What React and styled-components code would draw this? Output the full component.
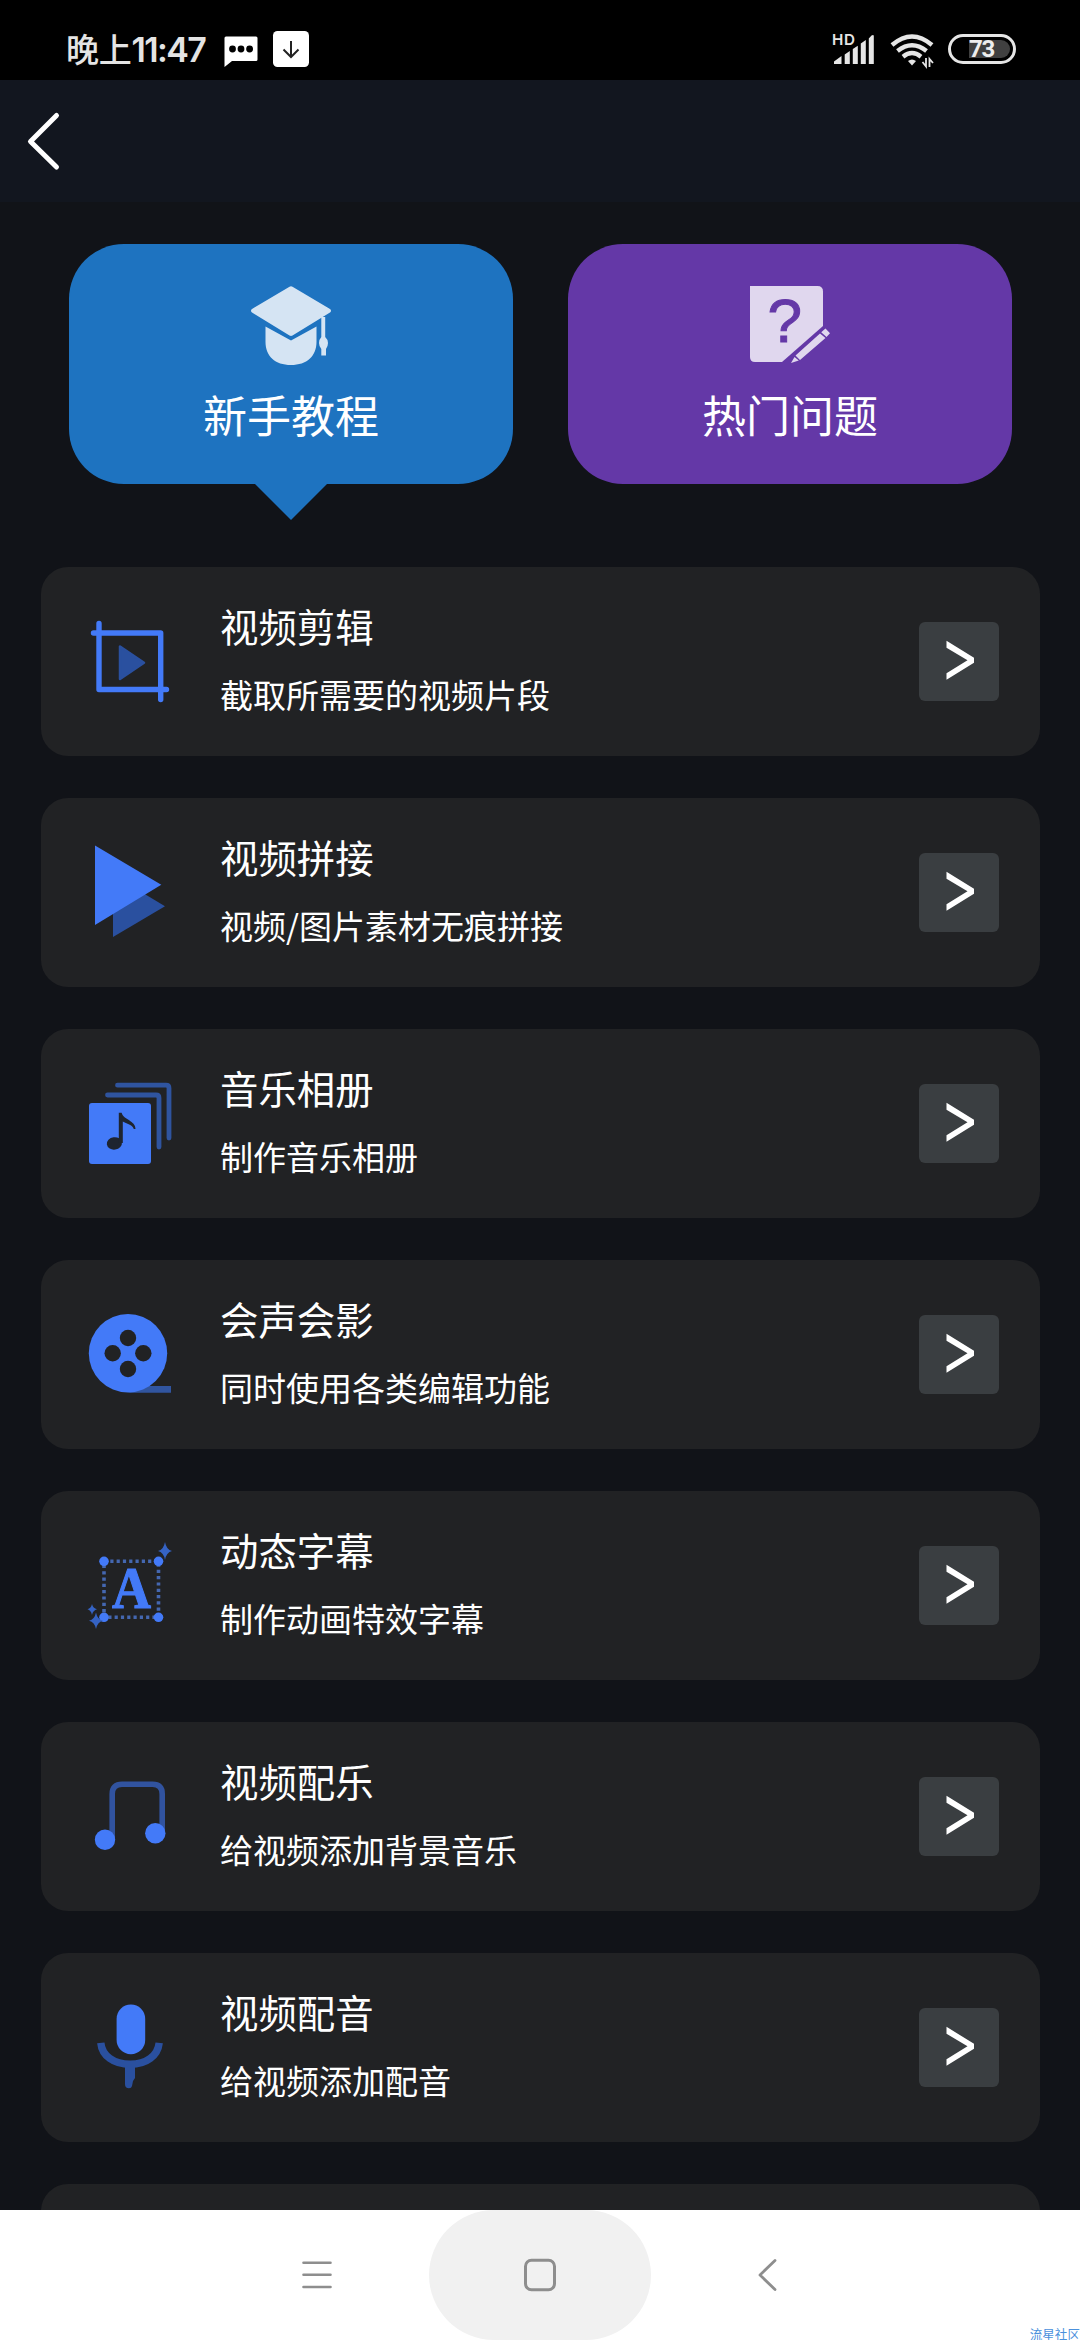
import React, { useState } from "react";
import styled, { createGlobalStyle } from "styled-components";

const GlobalStyle = createGlobalStyle`
  * {
    box-sizing: border-box;
  }
  body {
    margin: 0;
    background: #111318;
    font-family: "Noto Sans CJK SC", "Noto Sans", sans-serif;
  }
`;

const Screen = styled.div`
  display: flex;
  flex-direction: column;
  width: 1080px;
  height: 2340px;
  overflow: hidden;
  background: #111318;
  color: #ffffff;
`;
const StatusBar = styled.div`
  display: flex;
  justify-content: space-between;
  flex: none;
  height: 80px;
  padding: 0 64px 0 66px;
  background: #000000;
`;
const StatusGroup = styled.div`
  display: flex;
  align-items: center;
  padding-top: 18px;
`;
const Clock = styled.span`
  width: 158px;
  font-size: 33px;
  line-height: 40px;
  font-weight: 500;
  letter-spacing: -0.3px;
  color: #e4e4e4;
  white-space: nowrap;
`;
const ClockDigits = styled.span`
  font-family: Inter, sans-serif;
  font-size: 34px;
  font-weight: 600;
  letter-spacing: -1.6px;
`;
const StatusIcon = styled.svg`
  display: block;
  overflow: visible;
  margin-left: ${(props) => props.$gap || 0}px;
`;
const Battery = styled.div`
  display: flex;
  align-items: center;
  width: 68px;
  height: 30px;
  margin-left: 14px;
  padding-left: 18px;
  border: 3px solid #e6e6e6;
  border-radius: 15px;
`;
const BatteryLevel = styled.div`
  width: 41px;
  height: 18px;
  border-radius: 0 9px 9px 0;
  background: #404040;
  color: #eeeeee;
  font-family: Roboto, sans-serif;
  font-size: 24px;
  font-weight: 700;
  line-height: 19px;
  letter-spacing: -1.2px;
`;
const Header = styled.div`
  display: flex;
  flex: none;
  height: 122px;
  padding: 31px 0 0 24px;
  background: #12161f;
`;
const Content = styled.div`
  flex: 1;
  min-height: 0;
  overflow: hidden;
`;
const Tabs = styled.div`
  display: flex;
  gap: 55px;
  padding: 42px 0 0 69px;
`;
const Tab = styled.div`
  position: relative;
  display: flex;
  flex-direction: column;
  align-items: center;
  width: 444px;
  height: 240px;
  padding-top: 42px;
  border-radius: 55px;
  background: ${(props) => props.$color};
`;
const TabPointer = styled.div`
  position: absolute;
  top: 239px;
  left: 185px;
  border: 37px solid transparent;
  border-top-color: ${(props) => props.$color};
  border-bottom: 0;
`;
const TabIcon = styled.svg`
  display: block;
  flex: none;
  overflow: visible;
`;
const TabLabel = styled.div`
  margin-top: 15px;
  font-size: 44px;
  line-height: 66px;
`;
const List = styled.div`
  display: flex;
  flex-direction: column;
  gap: 42px;
  padding: 83px 40px 0 41px;
`;
const Card = styled.div`
  display: flex;
  align-items: center;
  flex: none;
  height: 189px;
  padding: 0 41px 0 45px;
  border-radius: 27px;
  background: #212224;
`;
const CardText = styled.div`
  flex: 1;
  padding: 0 0 9px 44px;
`;
const Title = styled.div`
  font-size: 38.4px;
  line-height: 56px;
`;
const Subtitle = styled.div`
  margin-top: 17px;
  font-size: 33px;
  line-height: 48px;
`;
const GoButton = styled.div`
  display: flex;
  width: 80px;
  height: 79px;
  border-radius: 6px;
  background: #3a3e41;
`;
const NavBar = styled.div`
  position: relative;
  display: flex;
  justify-content: center;
  flex: none;
  height: 130px;
  padding-right: 1px;
  background: #ffffff;
`;
const NavButton = styled.div`
  display: flex;
  align-items: center;
  justify-content: center;
  width: ${(props) => (props.$active ? 222 : 225)}px;
  height: 130px;
  padding-left: ${(props) => props.$shift || 0}px;
  border-radius: 65px;
  background: ${(props) => (props.$active ? "#f1f1f1" : "transparent")};
`;
const Watermark = styled.div`
  position: absolute;
  right: 0;
  bottom: 0;
  font-size: 12.6px;
  line-height: 13px;
  color: #4a90dc;
`;

const BLUE = "#437af8";
const DARK_BLUE = "#2a509f";

const CropIcon = () => (
  <g fill="none" stroke={BLUE} strokeWidth="5.4" strokeLinecap="round">
    <path d="M13 12.5V78.5H80.5M7.5 22H74.7V88.5" strokeLinejoin="round" />
    <path
      d="M34 35.5V68L58 51.7Z"
      fill={DARK_BLUE}
      stroke={DARK_BLUE}
      strokeWidth="2.5"
      strokeLinejoin="round"
    />
  </g>
);
const JoinIcon = () => (
  <>
    <path d="M27 33V95L79 64.3Z" fill={DARK_BLUE} />
    <path d="M9 3.5V83L75.3 42.7Z" fill={BLUE} />
  </>
);
const AlbumIcon = () => (
  <>
    <path
      d="M21.5 22H70Q73 22 73 25V74M31.5 12.2H80Q83 12.2 83 15.2V65"
      fill="none"
      stroke="#2f549f"
      strokeWidth="4.8"
      strokeLinecap="round"
    />
    <rect x="3" y="30" width="62" height="61" rx="3" fill={BLUE} />
    <ellipse cx="28.4" cy="70.4" rx="7.6" ry="6.2" fill="#1e2430" transform="rotate(-8 28.4 70.4)" />
    <path
      d="M32.8 70V39.8H35.6C37.5 47 49.5 47.5 49.5 56H47.8C46.5 51.5 40.5 51 36.8 48.5V70Z"
      fill="#1e2430"
    />
  </>
);
const ReelIcon = () => (
  <>
    <path d="M42 88.7H85V82H60Z" fill="#31559f" />
    <circle cx="42" cy="49.3" r="39.2" fill={BLUE} />
    <g fill="#212224">
      <circle cx="42" cy="34" r="8.2" />
      <circle cx="26.7" cy="49.3" r="8.2" />
      <circle cx="57.3" cy="49.3" r="8.2" />
      <circle cx="42" cy="65" r="8.2" />
    </g>
  </>
);
const CaptionIcon = () => (
  <>
    <path
      d="M18 26.3H72.5V82.3H18Z"
      fill="none"
      stroke="#4467b0"
      strokeWidth="3.6"
      strokeDasharray="3.2 3.1"
    />
    <g fill={BLUE}>
      <circle cx="18" cy="26.3" r="4.8" />
      <circle cx="72.5" cy="26.3" r="4.8" />
      <circle cx="18" cy="82.3" r="4.8" />
      <circle cx="72.5" cy="82.3" r="4.8" />
    </g>
    <text
      x="26"
      y="72.5"
      fontFamily="Liberation Serif, serif"
      fontWeight="700"
      fontSize="60"
      textLength="39"
      lengthAdjust="spacingAndGlyphs"
      fill={BLUE}
      stroke={BLUE}
      strokeWidth="1.2"
    >
      A
    </text>
    <g fill="#3563c4">
      <path d="M79 7Q80.3 14.7 86 16Q80.3 17.3 79 25Q77.7 17.3 72 16Q77.7 14.7 79 7Z" />
      <path d="M10 77.5Q11.3 84.4 17 85.7Q11.3 87 10 94Q8.7 87 3 85.7Q8.7 84.4 10 77.5Z" />
      <path d="M6 69Q7 73.3 11 74.3Q7 75.3 6 80Q5 75.3 1.5 74.3Q5 73.3 6 69Z" />
    </g>
  </>
);
const MusicIcon = () => (
  <>
    <path
      d="M26.2 72V28Q26.2 18.3 36 18.3H66.5Q76.2 18.3 76.2 28V66"
      fill="none"
      stroke="#31539f"
      strokeWidth="5.6"
    />
    <circle cx="19" cy="73.7" r="10.2" fill={BLUE} />
    <circle cx="69.3" cy="67.3" r="10.2" fill={BLUE} />
  </>
);
const MicIcon = () => (
  <>
    <path
      d="M14.8 45.8C16 59 28 67.3 44.3 67.3C60 67.3 71.8 59 73.2 45.8"
      fill="none"
      stroke={DARK_BLUE}
      strokeWidth="7.4"
    />
    <path d="M39 68H49V81L47 84L46 89Q45.5 91.3 43 91.3Q39 91.3 39 87Z" fill={DARK_BLUE} />
    <rect x="30.6" y="7.6" width="28.6" height="49.6" rx="14.2" fill={BLUE} />
  </>
);

const tutorials = [
  { title: "视频剪辑", text: "截取所需要的视频片段", Icon: CropIcon },
  { title: "视频拼接", text: "视频/图片素材无痕拼接", Icon: JoinIcon },
  { title: "音乐相册", text: "制作音乐相册", Icon: AlbumIcon },
  { title: "会声会影", text: "同时使用各类编辑功能", Icon: ReelIcon },
  { title: "动态字幕", text: "制作动画特效字幕", Icon: CaptionIcon },
  { title: "视频配乐", text: "给视频添加背景音乐", Icon: MusicIcon },
  { title: "视频配音", text: "给视频添加配音", Icon: MicIcon },
];

const TutorialCard = ({ title, text, Icon }) => (
  <Card>
    <svg width="90" height="101" viewBox="0 0 90 101">
      <Icon />
    </svg>
    <CardText>
      <Title>{title}</Title>
      <Subtitle>{text}</Subtitle>
    </CardText>
    <GoButton>
      <svg width="80" height="79" viewBox="0 0 80 79">
        <path d="M27.5 18.8L55 35.8V40.7L27.5 57.8V51.3L48.5 38.3L27.5 25.8Z" fill="#ffffff" />
      </svg>
    </GoButton>
  </Card>
);

const CapIcon = () => (
  <TabIcon width="80" height="80" viewBox="0 0 80 80" fill="#d5e4f3">
    <path d="M38.5 .7Q40 -.2 41.5 .7L79 23Q81 24.7 79 26.5L41.5 49.5Q40 50.4 38.5 49.5L1 26.5Q-1 24.7 1 23Z" />
    <path d="M14.5 40.5L40 54.5L65.5 40.5V56C65.5 70 56 79 40 79C24 79 14.5 70 14.5 56Z" />
    <path d="M70.3 31H74.2V51Q77 53.5 77 57Q77 60 75 63V69.5H70.3V63Q68 60 68 57Q68 53.5 70.3 51Z" />
  </TabIcon>
);
const QuestionIcon = () => (
  <TabIcon width="80" height="80" viewBox="0 0 80 80" fill="#e0d7ee">
    <path d="M0 0H67.5Q73 0 73 5.5V40L32 76H5Q0 76 0 71Z" />
    <text
      x="17.5"
      y="55.5"
      fontFamily="Liberation Sans, sans-serif"
      fontSize="62"
      fill="#6438a7"
      stroke="#6438a7"
      strokeWidth="1"
    >
      ?
    </text>
    <path d="M45.5 69.5L70 47.5L75.5 52L50 74ZM71.2 46.2L75.5 42.5L80 47.3L76.5 51ZM44.5 71L48.8 74.5L41 77Z" />
  </TabIcon>
);

const SignalIcon = () => (
  <StatusIcon width="44" height="36" viewBox="0 0 44 36" fill="#e6e6e6">
    <text x="0" y="13.6" fontFamily="Inter, sans-serif" fontWeight="600" fontSize="15.2" textLength="23">
      HD
    </text>
    <path d="M2 33V30.5L9.5 25V33ZM12.7 33V23.5L17.8 20V33ZM20.8 33V18L25.8 14.7V33ZM28.8 33V12.5L33.8 9V33ZM36.8 33V7.5L39.5 4.5Q41.8 3.5 41.8 5V33Z" />
  </StatusIcon>
);
const WifiIcon = () => (
  <StatusIcon $gap={14} width="44" height="36" viewBox="0 0 44 36">
    <g fill="none" stroke="#e6e6e6" strokeWidth="4.4">
      <path d="M2 14Q22 -3 42 14" />
      <path d="M7.5 20Q22 8.5 36.5 20" />
      <path d="M13 25.7Q22 18.5 31 25.7" />
    </g>
    <path d="M18 30Q22 26.8 26 30L22 34.5Z" fill="#e6e6e6" />
    <path d="M36 27V35.5L32.5 31M39.5 36V28L43 32" fill="none" stroke="#e6e6e6" strokeWidth="1.8" />
  </StatusIcon>
);

function App() {
  const [active, setActive] = useState(0);
  const tabs = [
    { label: "新手教程", color: "#1e73c0", Icon: CapIcon },
    { label: "热门问题", color: "#6438a7", Icon: QuestionIcon },
  ];

  return (
    <Screen>
      <GlobalStyle />
      <StatusBar>
        <StatusGroup>
          <Clock>
            晚上<ClockDigits>11:47</ClockDigits>
          </Clock>
          <StatusIcon width="34" height="36" viewBox="0 0 34 36">
            <path d="M2 5.5H32Q33.5 5.5 33.5 7V28.5Q33.5 30 32 30H8L.5 36V7Q.5 5.5 2 5.5Z" fill="#fff" />
            <circle cx="8.5" cy="18" r="3.4" />
            <circle cx="17" cy="18" r="3.4" />
            <circle cx="25.6" cy="18" r="3.4" />
          </StatusIcon>
          <StatusIcon $gap={15} width="36" height="36" viewBox="0 0 36 36">
            <rect width="36" height="36" rx="4.5" fill="#fff" />
            <path d="M18 10V26M10.5 18.5L18 26L25.5 18.5" fill="none" stroke="#222" strokeWidth="2" />
          </StatusIcon>
        </StatusGroup>
        <StatusGroup>
          <SignalIcon />
          <WifiIcon />
          <Battery>
            <BatteryLevel>73</BatteryLevel>
          </Battery>
        </StatusGroup>
      </StatusBar>
      <Header>
        <svg width="40" height="62" viewBox="0 0 40 62">
          <path
            d="M32.5 4.5L6.5 30.5L32.5 56"
            fill="none"
            stroke="#fff"
            strokeWidth="5"
            strokeLinecap="round"
            strokeLinejoin="round"
          />
        </svg>
      </Header>
      <Content>
        <Tabs>
          {tabs.map(({ label, color, Icon }, index) => (
            <Tab key={label} $color={color} onClick={() => setActive(index)}>
              <Icon />
              <TabLabel>{label}</TabLabel>
              {active === index && <TabPointer $color={color} />}
            </Tab>
          ))}
        </Tabs>
        <List>
          {tutorials.map((item) => (
            <TutorialCard key={item.title} {...item} />
          ))}
          <Card />
        </List>
      </Content>
      <NavBar>
        <NavButton $shift={2}>
          <svg width="32" height="32" viewBox="0 0 32 32" stroke="#8e8e8e" strokeWidth="2.6" strokeLinecap="round">
            <path d="M2.5 3.7H29.5M2.5 15.8H29.5M2.5 28H29.5" />
          </svg>
        </NavButton>
        <NavButton $active $shift={1}>
          <svg width="34" height="34" viewBox="0 0 34 34">
            <rect x="2.5" y="2.2" width="29" height="29.6" rx="6" fill="none" stroke="#8e8e8e" strokeWidth="3" />
          </svg>
        </NavButton>
        <NavButton $shift={8}>
          <svg width="24" height="34" viewBox="0 0 24 34">
            <path
              d="M20 2.5L5 17L20 31.5"
              fill="none"
              stroke="#8e8e8e"
              strokeWidth="2.8"
              strokeLinecap="round"
              strokeLinejoin="round"
            />
          </svg>
        </NavButton>
        <Watermark>流星社区</Watermark>
      </NavBar>
    </Screen>
  );
}

export default App;
